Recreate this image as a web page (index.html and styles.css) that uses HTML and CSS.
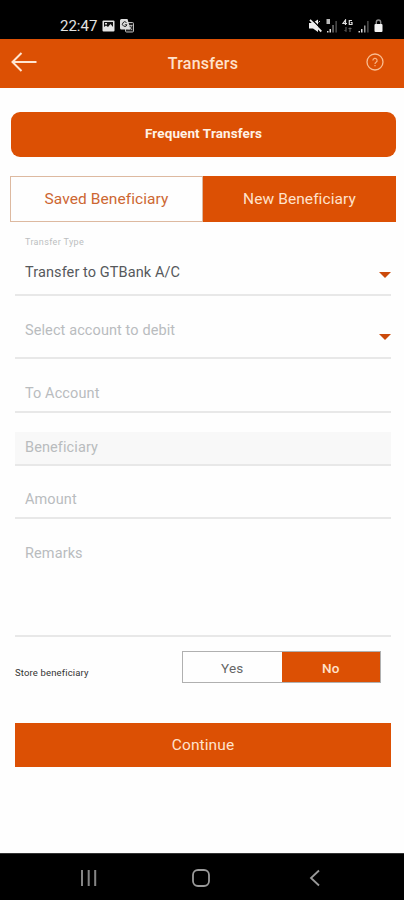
FILE: index.html
```html
<!DOCTYPE html>
<html lang="en">
<head>
<meta charset="utf-8">
<title>Transfers</title>
<link rel="stylesheet" href="styles.css">
</head>
<body>
<div class="status">
  <div class="status-left">
    <span class="clock">22:47</span>
    <svg width="13" height="12" viewBox="0 0 13 12"><rect x=".5" y=".5" width="12" height="11" rx="1" fill="#e4e4e4"/><rect x="2" y="2" width="9" height="7" fill="#111"/><path d="M2 9.5V7l2-1.500 2 1.500 2.500-3L11 7v2.500z" fill="#e4e4e4"/><rect x="3" y="3" width="2" height="1.500" fill="#e4e4e4"/></svg>
    <svg class="translate" width="14" height="14" viewBox="0 0 14 14"><rect x="5.500" y="3.500" width="8" height="9.500" rx="1" fill="#222" stroke="#bbb"/><path d="M1.500 0h6l3 10.500h-9A1.500 1.500 0 0 1 0 9V1.500A1.500 1.500 0 0 1 1.500 0z" fill="#ddd"/><path d="M6.500 3.600A2.300 2.300 0 1 0 7 5.800H4.800" fill="none" stroke="#222"/><path d="M8.500 6.500h4M11.500 6.500c-.3 2-1.500 3-2.500 4M9.500 8l2.500 3" fill="none" stroke="#ccc" stroke-width=".8"/></svg>
  </div>
  <div class="status-right">
    <svg class="mute" width="13" height="14" viewBox="0 0 13 14"><path d="M0 4h3.500L9 .5V13L4 9.500H0z" fill="#eee"/><path d="M2.300 0l11 11" stroke="#000" stroke-width="1.300"/><path d="M1 .8l11.300 11.700" stroke="#eee" stroke-width="1.800"/><path d="M9.500 3.500l1.500-1.500" stroke="#ccc"/></svg>
    <svg width="12" height="14" viewBox="0 0 12 14"><path d="M.5 0h3.500v5H.5z" fill="#bbb"/><path d="M1 12h1.500v1.500H1zM3.500 10H5v3.500H3.500z" fill="#ddd"/><path d="M6.300 6h1.500v7.500H6.300z" fill="#777"/><path d="M9.300 2h1.700v11.500H9.300z" fill="#444"/></svg>
    <svg width="12" height="14" viewBox="0 0 12 14"><path d="M3.500 6V1L1 4.500h4M10 1.500H7.300v4H10v-2H8.700" fill="none" stroke="#ddd" stroke-width="1.200"/><path d="M4 8v4.500M2.500 11L4 12.500M8 13V8.500M6.500 9.500h3" fill="none" stroke="#666"/></svg>
    <svg width="12" height="14" viewBox="0 0 12 14"><path d="M.5 12H2v1.500H.5zM3 10h1.500v3.500H3z" fill="#ddd"/><path d="M6 6.500h1.500v7H6z" fill="#999"/><path d="M9 2h1.700v11.500H9z" fill="#444"/></svg>
    <svg width="9" height="14" viewBox="0 0 9 14"><path d="M2.300 5.500V3.200a2.200 2.200 0 0 1 4.400 0v2.300" fill="none" stroke="#888" stroke-width="1.400"/><rect x=".5" y="5" width="8" height="8" rx="1" fill="#f4f4f4"/></svg>
  </div>
</div>
<header class="header">
  <svg class="back" width="26" height="20" viewBox="0 0 26 20"><path d="M10.500 1L1.500 10l9 9M1.500 10H25.500" fill="none" stroke="#ffe6d2" stroke-width="2"/></svg>
  <h1 class="title">Transfers</h1>
  <svg class="help" width="18" height="18" viewBox="0 0 18 18"><circle cx="9" cy="9" r="8" fill="none" stroke="#f9bd92" stroke-width="1.300"/><path d="M6.900 7.500a2.100 2.100 0 1 1 3.200 1.700c-.8.500-1.100.8-1.100 1.700M9 12v1.300" fill="none" stroke="#f9b484" stroke-width="1.200"/></svg>
</header>
<main class="content">
  <button class="frequent"><span>Frequent Transfers</span></button>
  <div class="tabs">
    <button class="tab"><span>Saved Beneficiary</span></button>
    <button class="tab tab-active"><span>New Beneficiary</span></button>
  </div>
  <form class="form">
    <div class="field field-type">
      <span class="label">Transfer Type</span>
      <div class="select"><span class="value">Transfer to GTBank A/C</span><i class="caret"></i></div>
    </div>
    <div class="field field-debit"><div class="select"><span class="hint">Select account to debit</span><i class="caret caret-low"></i></div></div>
    <div class="field field-to"><span class="hint">To Account</span></div>
    <div class="field field-beneficiary"><span class="hint">Beneficiary</span></div>
    <div class="field field-amount"><span class="hint">Amount</span></div>
    <div class="field field-remarks"><span class="hint">Remarks</span></div>
    <div class="store">
      <span class="store-label">Store beneficiary</span>
      <div class="toggle"><span class="option">Yes</span><span class="option option-active">No</span></div>
    </div>
    <button class="continue"><span>Continue</span></button>
  </form>
</main>
<nav class="nav">
  <svg width="18" height="18" viewBox="0 0 18 18"><path d="M2 1v16M8.700 1v16M15.200 1v16" stroke="#858585" stroke-width="2"/></svg>
  <svg class="home" width="20" height="20" viewBox="0 0 20 20"><rect x="2" y="2" width="16" height="16" rx="5" fill="none" stroke="#9a9a9a" stroke-width="1.800"/></svg>
  <svg width="12" height="18" viewBox="0 0 12 18"><path d="M10 1.500L2 9l8 7.500" fill="none" stroke="#999" stroke-width="1.800"/></svg>
</nav>
</body>
</html>
```
FILE: styles.css
```css
* { box-sizing: border-box; }
body {
  margin: 0;
  height: 900px;
  display: flex;
  flex-direction: column;
  background: #fefefe;
  font-family: Roboto, sans-serif;
  overflow: hidden;
}
button { border: 0; padding: 0; font-family: inherit; }
svg { display: block; flex: none; }
.status {
  height: 39px;
  background: #000;
  display: flex;
  justify-content: space-between;
  padding: 12px 21px 0 60px;
}
.status-left, .status-right { display: flex; align-items: center; height: 27px; }
.status-left { gap: 5px; }
.status-right { gap: 4px; }
.mute { margin-right: 0; }
.clock { color: #e2e2e2; font-size: 15px; line-height: 20px; width: 37px; }
.header {
  height: 49px;
  background: #dc5004;
  display: flex;
  align-items: center;
  justify-content: space-between;
  padding: 0 20px 0 11px;
}
.back { margin-top: -3px; }
.title { margin: 0 -3px 0 0; font-size: 16px; font-weight: 500; letter-spacing: .25px; color: #ffe2cc; }
.help { margin-top: -3px; }
.content { flex: 1; padding: 24px 8px 0 10px; }
.frequent {
  display: block;
  width: 385px;
  height: 45px;
  margin-left: 1px;
  padding-bottom: 3px;
  border-radius: 9px;
  background: #dc5004;
  color: #fff2e6;
  font-size: 13.500px;
  font-weight: 700;
  letter-spacing: .1px;
}
.tabs { display: flex; width: 386px; height: 46px; margin-top: 19px; }
.tab {
  flex: 1;
  padding-bottom: 1px;
  background: #fefefe;
  border: 1px solid #ddb9a0;
  color: #cd6732;
  font-size: 15.500px;
  letter-spacing: .08px;
}
.tab-active { background: #dc5004; border-color: #dc5004; color: #ffe2cc; }
.form { display: flex; flex-direction: column; width: 376px; margin-left: 5px; }
.field {
  border-bottom: 2px solid #e8e8e8;
  padding-left: 10px;
  display: flex;
  flex-direction: column;
  justify-content: flex-end;
}
.label { color: #bcbfc1; font-size: 9px; line-height: 12px; letter-spacing: .35px; margin-bottom: 15px; }
.select { display: flex; align-items: center; justify-content: space-between; height: 20px; }
.value { color: #56595c; font-size: 14.500px; line-height: 20px; letter-spacing: .1px; }
.hint { color: #b9bcbe; font-size: 14.500px; line-height: 20px; letter-spacing: .1px; }
.caret { border: 6px solid transparent; border-top: 6px solid #cb4a0a; border-bottom: 0; margin-top: 3px; }
.caret-low { margin-top: 11px; }
.field-type { height: 74px; padding-bottom: 11px; }
.field-debit { height: 63px; padding-bottom: 16px; }
.field-to { height: 54px; padding-bottom: 7px; }
.field-beneficiary { height: 34px; margin-top: 19px; padding-bottom: 6px; background: #f8f8f8; }
.field-amount { height: 53px; padding-bottom: 7px; }
.field-remarks { height: 118px; justify-content: flex-start; padding-top: 25px; }
.store { display: flex; justify-content: space-between; align-items: center; margin-top: 14px; padding-right: 10px; }
.store-label { color: #333; font-size: 9.500px; padding-top: 10px; letter-spacing: .15px; }
.toggle { display: flex; width: 199px; height: 32px; border: 1px solid #b0b0b0; }
.option { flex: 1; display: flex; align-items: center; justify-content: center; padding-top: 2px; color: #666; font-size: 13.500px; letter-spacing: .2px; }
.option-active { background: #dc5004; color: #ffe2cc; font-weight: 500; }
.continue { height: 44px; margin-top: 40px; background: #dc5004; color: #ffe2cc; font-size: 15.500px; letter-spacing: .1px; }
.nav {
  height: 47px;
  background: #000;
  border-top: 1px solid #333;
  display: flex;
  align-items: center;
  justify-content: space-between;
  padding: 1px 83px 0 80px;
}
.home { margin-right: 6px; }
```
